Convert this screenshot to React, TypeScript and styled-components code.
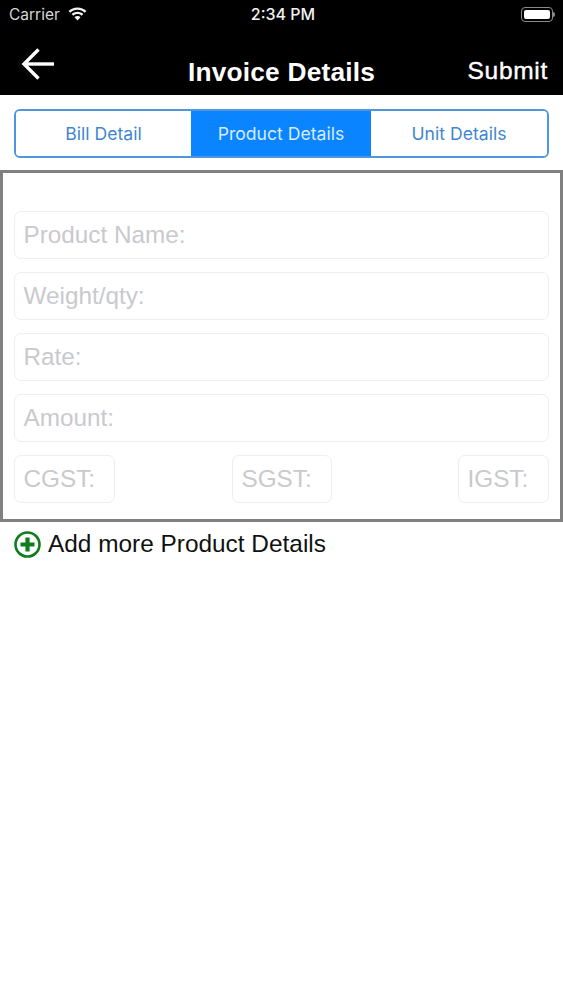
import React from 'react'
import styled, { createGlobalStyle } from 'styled-components'

const GlobalStyle = createGlobalStyle`
  html, body {
    margin: 0;
    padding: 0;
    background: #fff;
    font-family: "Liberation Sans", Arial, sans-serif;
  }
  * {
    box-sizing: border-box;
  }
`

const Screen = styled.div`
  width: 563px;
  height: 1000px;
  background: #fff;
  overflow: hidden;
`

const Header = styled.header`
  height: 95px;
  background: #000;
  color: #fff;
  display: flex;
  flex-direction: column;
`

const StatusBar = styled.div`
  height: 28px;
  padding: 0 10px 0 9px;
  display: grid;
  grid-template-columns: 1fr auto 1fr;
  align-items: center;
  font-family: Inter, "Liberation Sans", sans-serif;
  color: #f2f2f2;
`

const Carrier = styled.div`
  display: flex;
  align-items: center;
  gap: 8px;
  color: #d6d6d6;
  font-size: 15.5px;
`

const Clock = styled.div`
  margin-left: 4px;
  font-weight: 500;
  font-size: 16px;
`

const Battery = styled.div`
  justify-self: end;
  position: relative;
  width: 32px;
  height: 15px;
  border: 1px solid #8a8a8a;
  border-radius: 4px;
  padding: 2px;

  &::before {
    content: '';
    display: block;
    height: 100%;
    border-radius: 2px;
    background: #fff;
  }

  &::after {
    content: '';
    position: absolute;
    right: -3px;
    top: 4px;
    width: 2px;
    height: 5px;
    border-radius: 0 2px 2px 0;
    background: #8a8a8a;
  }
`

const NavBar = styled.div`
  flex: 1;
  display: grid;
  grid-template-columns: 1fr auto 1fr;
  align-items: center;
  padding: 0 15px;
`

const BackButton = styled.button`
  width: 34px;
  height: 36px;
  margin: 4px 0 0 6px;
  padding: 0;
  border: 0;
  background: none;
  color: #fff;
`

const Title = styled.h1`
  margin: 20px 0 0;
  font-size: 26.3px;
  font-weight: 700;
  line-height: 30px;
  letter-spacing: 0.2px;
`

const SubmitButton = styled.button`
  justify-self: end;
  margin-top: 18px;
  padding: 0;
  border: 0;
  background: none;
  color: #fff;
  font-family: inherit;
  font-size: 24.5px;
  font-weight: 500;
  letter-spacing: 0.7px;
  -webkit-text-stroke: 0.4px #fff;
`

const Segments = styled.div`
  margin: 14px 14px 12px;
  width: 535px;
  height: 49px;
  display: grid;
  grid-template-columns: 175px 180px 1fr;
  border: 2px solid #4f96dc;
  border-radius: 6px;
  overflow: hidden;
`

const Segment = styled.div<{ $active?: boolean }>`
  display: flex;
  align-items: center;
  justify-content: center;
  font-family: Inter, "Liberation Sans", sans-serif;
  font-size: 17.6px;
  color: ${p => (p.$active ? '#d9ecff' : '#3f86cf')};
  background: ${p => (p.$active ? '#0a84ff' : '#fff')};
`

const Panel = styled.section`
  height: 352px;
  border: 3px solid #808080;
  padding: 38px 11px 0;
  display: flex;
  flex-direction: column;
  gap: 13px;
`

const Field = styled.div<{ $width?: number }>`
  width: ${p => (p.$width ? `${p.$width}px` : '100%')};
  height: 48px;
  padding-left: 8.5px;
  display: flex;
  align-items: center;
  border: 1px solid #eeeef0;
  border-radius: 7px;
  background: #fff;
  color: #c9c9ce;
  font-size: 24.3px;
  white-space: nowrap;
`

const TaxRow = styled.div`
  display: grid;
  grid-template-columns: 218px 226px 91px;
`

const AddMore = styled.div`
  margin: 7px 0 0 14px;
  display: flex;
  align-items: center;
  gap: 7px;
  color: #111;
  font-size: 24.4px;
  line-height: 30px;
`

const WifiIcon = () => (
  <svg width="19" height="14" viewBox="0 0 19 14" fill="#f2f2f2">
    <path d="M9.5 0.5C6 0.5 2.9 1.8 0.6 4l1.6 1.7C4.1 3.9 6.7 2.8 9.5 2.8s5.4 1.1 7.3 2.9L18.4 4C16.1 1.8 13 0.5 9.5 0.5z" />
    <path d="M9.5 4.8c-2.3 0-4.3.9-5.8 2.3l1.6 1.7c1.1-1 2.6-1.7 4.2-1.7s3.1.7 4.2 1.7l1.6-1.7C13.8 5.7 11.8 4.8 9.5 4.8z" />
    <path d="M9.5 9.1c-1.2 0-2.2.5-3 1.2l3 3.2 3-3.2c-.8-.7-1.8-1.2-3-1.2z" />
  </svg>
)

const BackIcon = () => (
  <svg width="34" height="36" viewBox="0 0 34 36" fill="none" stroke="#fff" strokeWidth="3.4">
    <path d="M33 18H3" />
    <path d="M17.5 3.5L3 18l14.5 14.5" />
  </svg>
)

const AddIcon = () => (
  <svg width="27" height="27" viewBox="0 0 27 27">
    <circle cx="13.5" cy="13.5" r="12" fill="#fff" stroke="#0f7d1e" strokeWidth="2.6" />
    <path d="M13.5 6.5v14M6.5 13.5h14" stroke="#0f7d1e" strokeWidth="4.2" />
  </svg>
)

const fields = ['Product Name:', 'Weight/qty:', 'Rate:', 'Amount:']
const taxes = [
  { label: 'CGST:', width: 101 },
  { label: 'SGST:', width: 100 },
  { label: 'IGST:', width: 91 },
]

export default function App() {
  return (
    <Screen>
      <GlobalStyle />
      <Header>
        <StatusBar>
          <Carrier>
            Carrier
            <WifiIcon />
          </Carrier>
          <Clock>2:34 PM</Clock>
          <Battery />
        </StatusBar>
        <NavBar>
          <BackButton>
            <BackIcon />
          </BackButton>
          <Title>Invoice Details</Title>
          <SubmitButton>Submit</SubmitButton>
        </NavBar>
      </Header>
      <Segments>
        <Segment>Bill Detail</Segment>
        <Segment $active>Product Details</Segment>
        <Segment>Unit Details</Segment>
      </Segments>
      <Panel>
        {fields.map(f => (
          <Field key={f}>{f}</Field>
        ))}
        <TaxRow>
          {taxes.map(t => (
            <Field key={t.label} $width={t.width}>{t.label}</Field>
          ))}
        </TaxRow>
      </Panel>
      <AddMore>
        <AddIcon />
        Add more Product Details
      </AddMore>
    </Screen>
  )
}
